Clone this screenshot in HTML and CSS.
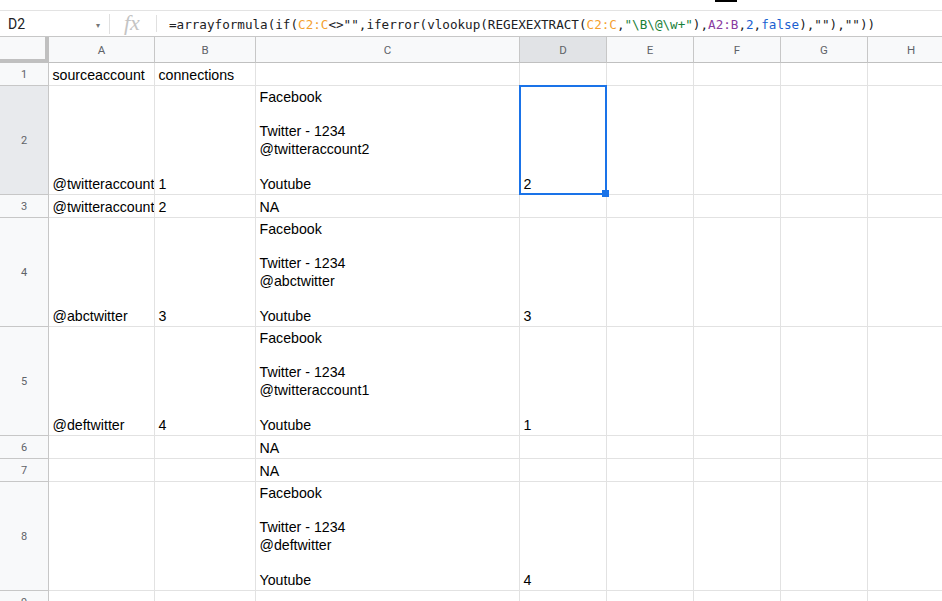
FILE: index.html
```html
<!DOCTYPE html>
<html>
<head>
<meta charset="utf-8">
<link rel="stylesheet" href="styles.css">
</head>
<body>
<div class="app">
  <div class="cursor-mark"></div>
  <div class="topstrip"></div>
  <div class="formulabar">
    <div class="namebox"><span class="ref">D2</span><span class="caret">▾</span></div>
    <div class="fx">fx</div>
    <div class="formula">=arrayformula(if(<span class="r1">C2:C</span>&lt;&gt;"",iferror(vlookup(REGEXEXTRACT(<span class="r1">C2:C</span>,<span class="str">"\B\@\w+"</span>),<span class="r2">A2:B</span>,<span class="num">2</span>,<span class="num">false</span>),""),""))</div>
  </div>
  <div class="sheet">
    <div class="grid">
      <div class="corner"></div>
      <div class="ch">A</div><div class="ch">B</div><div class="ch">C</div><div class="ch sel">D</div><div class="ch">E</div><div class="ch">F</div><div class="ch">G</div><div class="ch">H</div>

      <div class="rh">1</div>
      <div class="c">sourceaccount</div><div class="c">connections</div><div class="c"></div><div class="c"></div><div class="c"></div><div class="c"></div><div class="c"></div><div class="c"></div>

      <div class="rh sel">2</div>
      <div class="c">@twitteraccount1</div><div class="c">1</div><div class="c">Facebook<br><br>Twitter - 1234<br>@twitteraccount2<br><br>Youtube</div><div class="c">2</div><div class="c"></div><div class="c"></div><div class="c"></div><div class="c"></div>

      <div class="rh">3</div>
      <div class="c">@twitteraccount1</div><div class="c">2</div><div class="c">NA</div><div class="c"></div><div class="c"></div><div class="c"></div><div class="c"></div><div class="c"></div>

      <div class="rh">4</div>
      <div class="c">@abctwitter</div><div class="c">3</div><div class="c">Facebook<br><br>Twitter - 1234<br>@abctwitter<br><br>Youtube</div><div class="c">3</div><div class="c"></div><div class="c"></div><div class="c"></div><div class="c"></div>

      <div class="rh">5</div>
      <div class="c">@deftwitter</div><div class="c">4</div><div class="c">Facebook<br><br>Twitter - 1234<br>@twitteraccount1<br><br>Youtube</div><div class="c">1</div><div class="c"></div><div class="c"></div><div class="c"></div><div class="c"></div>

      <div class="rh">6</div>
      <div class="c"></div><div class="c"></div><div class="c">NA</div><div class="c"></div><div class="c"></div><div class="c"></div><div class="c"></div><div class="c"></div>

      <div class="rh">7</div>
      <div class="c"></div><div class="c"></div><div class="c">NA</div><div class="c"></div><div class="c"></div><div class="c"></div><div class="c"></div><div class="c"></div>

      <div class="rh">8</div>
      <div class="c"></div><div class="c"></div><div class="c">Facebook<br><br>Twitter - 1234<br>@deftwitter<br><br>Youtube</div><div class="c">4</div><div class="c"></div><div class="c"></div><div class="c"></div><div class="c"></div>

      <div class="rh">9</div>
      <div class="c"></div><div class="c"></div><div class="c"></div><div class="c"></div><div class="c"></div><div class="c"></div><div class="c"></div><div class="c"></div>
    </div>
    <div class="selection"><div class="handle"></div></div>
  </div>
</div>
</body>
</html>
```
FILE: styles.css
```css
html, body {
  margin: 0;
  padding: 0;
  background: #fff;
  overflow: hidden;
}
.app {
  position: relative;
  width: 942px;
  height: 601px;
  overflow: hidden;
}
.cursor-mark {
  position: absolute;
  left: 715px;
  top: 0;
  width: 22px;
  height: 2px;
  background: #000;
}
.topstrip {
  height: 10px;
  border-bottom: 1px solid #e3e3e3;
}
.formulabar {
  height: 25px;
  border-bottom: 1px solid #c7c7c7;
  display: flex;
  align-items: center;
}
.namebox {
  width: 110px;
  height: 20px;
  box-sizing: border-box;
  border-right: 1px solid #e0e0e0;
  display: flex;
  align-items: center;
  padding-left: 8px;
  padding-right: 9px;
}
.ref {
  flex: 1;
  font-family: Roboto, "Liberation Sans", sans-serif;
  font-size: 14px;
  color: #202124;
}
.caret {
  font-family: "DejaVu Sans", sans-serif;
  font-size: 8px;
  color: #777;
  margin-top: 3px;
}
.fx {
  width: 47px;
  height: 17px;
  box-sizing: border-box;
  border-right: 1px solid #e0e0e0;
  font-family: "Liberation Serif", serif;
  font-style: italic;
  font-size: 22px;
  line-height: 16px;
  color: #c4c4c4;
  padding-left: 14px;
}
.formula {
  padding-left: 12px;
  font-family: "DejaVu Sans Mono", monospace;
  font-size: 12.62px;
  color: #202124;
  white-space: nowrap;
  margin-top: 1px;
}
.r1 { color: #f4a12f; }
.r2 { color: #8a3aa0; }
.str { color: #188038; }
.num { color: #1a5fd0; }

.sheet {
  position: relative;
}
.grid {
  display: grid;
  grid-template-columns: 49px 106px 101px 264px 87px 87px 87px 87px 87px;
  grid-template-rows: 26px 23px 109px 23px 109px 109px 23px 23px 109px 23px;
  width: 965px;
}
.grid > div {
  box-sizing: border-box;
  overflow: hidden;
  white-space: nowrap;
}
.corner {
  background: #f8f9fa;
  border-right: 4px solid #c0c0c0;
  border-bottom: 4px solid #c0c0c0;
}
.ch {
  background: #f8f9fa;
  border-right: 1px solid #c7c7c7;
  border-bottom: 1px solid #c0c0c0;
  font-family: Roboto, "Liberation Sans", sans-serif;
  font-size: 11.5px;
  color: #5f6368;
  display: flex;
  align-items: center;
  justify-content: center;
  padding-top: 1px;
}
.ch.sel {
  background: #e1e3e6;
}
.rh {
  background: #f8f9fa;
  border-right: 1px solid #c7c7c7;
  border-bottom: 1px solid #c7c7c7;
  font-family: Roboto, "Liberation Sans", sans-serif;
  font-size: 11px;
  color: #5f6368;
  display: flex;
  align-items: center;
  justify-content: center;
}
.rh.sel {
  background: #e8eaed;
}
.c {
  border-right: 1px solid #e2e2e2;
  border-bottom: 1px solid #e2e2e2;
  font-family: "Liberation Sans", Arial, sans-serif;
  font-size: 14.2px;
  line-height: 17.4px;
  color: #000;
  padding: 0 2px 1px 3.5px;
  display: flex;
  flex-direction: column;
  justify-content: flex-end;
}
.c:empty {
  display: block;
}
.selection {
  position: absolute;
  left: 519px;
  top: 48px;
  width: 88px;
  height: 110px;
  box-sizing: border-box;
  border: 2px solid #1a73e8;
}
.handle {
  position: absolute;
  right: -4px;
  bottom: -4px;
  width: 7px;
  height: 7px;
  background: #1a73e8;
}
```
